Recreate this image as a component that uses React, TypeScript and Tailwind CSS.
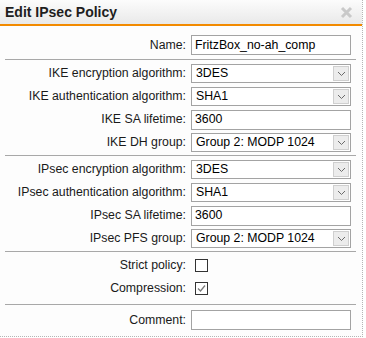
const font = { fontFamily: "'Liberation Sans', Arial, sans-serif" };

const Chevron = () => (
  <svg width="9" height="6" viewBox="0 0 9 6" fill="none">
    <path d="M1 1l3.5 3.5L8 1" stroke="#6b6b6b" strokeWidth="1" />
  </svg>
);

const Label = ({ text }: { text: string }) => (
  <div className="text-right pr-[5px] text-[12.3px] text-[#1a1a1a] whitespace-nowrap leading-none">{text}</div>
);

const SelectBox = ({ value }: { value: string }) => (
  <div className="flex h-[19px] w-[160px] border border-[#a3a3a3] bg-white">
    <div className="flex-1 pl-[4px] text-[12.3px] text-black flex items-center leading-none">{value}</div>
    <div className="w-[16px] my-px mr-px bg-[#ececec] border border-[#cfcfcf] flex items-center justify-center">
      <Chevron />
    </div>
  </div>
);

const TextBox = ({ value = "" }: { value?: string }) => (
  <div className="h-[20px] w-[160px] border border-[#a3a3a3] bg-white pl-[3px] text-[12.3px] text-black flex items-center leading-none">
    {value}
  </div>
);

const CheckBox = ({ checked }: { checked?: boolean }) => (
  <div className="ml-[4px] w-[13px] h-[13px] border border-[#333] bg-white flex items-center justify-center">
    {checked && (
      <svg width="11" height="11" viewBox="0 0 11 11" fill="none">
        <path d="M2 5.5l2.5 2.5L9 2.5" stroke="#7a7a7a" strokeWidth="1.3" />
      </svg>
    )}
  </div>
);

const Row = ({ label, children, h = "h-[23px]" }: { label: string; children: React.ReactNode; h?: string }) => (
  <div className={`grid grid-cols-[191px_160px] items-center ${h}`}>
    <Label text={label} />
    <div className="flex items-center">{children}</div>
  </div>
);

const Sep = ({ mt = "mt-px" }: { mt?: string }) => (
  <div className={`ml-[5px] w-[351px] h-px bg-[#a8a8a8] mb-[2px] ${mt}`} />
);

export default function App() {
  return (
    <div className="w-[366px] h-[338px] bg-white overflow-hidden" style={font}>
      <div className="w-[363px] h-[337px] border-r border-b border-dotted border-[#b5b5b5] bg-[#fdfdfd]">
        <div className="h-[26px] bg-gradient-to-b from-[#fcfcfc] to-[#e9e9e9] border-b-2 border-[#f28a00] flex items-center justify-between pl-[5px] pr-[9px]">
          <div className="text-[14px] font-bold text-[#1e1e1e] leading-none">Edit IPsec Policy</div>
          <svg width="13" height="13" viewBox="0 0 13 13">
            <path d="M2 2l9 9M11 2L2 11" stroke="#c9c9c9" strokeWidth="3" />
          </svg>
        </div>
        <div className="pt-[6px]">
          <Row label="Name:" h="h-[26px]">
            <TextBox value="FritzBox_no-ah_comp" />
          </Row>
          <Sep />
          <Row label="IKE encryption algorithm:"><SelectBox value="3DES" /></Row>
          <Row label="IKE authentication algorithm:"><SelectBox value="SHA1" /></Row>
          <Row label="IKE SA lifetime:"><TextBox value="3600" /></Row>
          <Row label="IKE DH group:"><SelectBox value="Group 2: MODP 1024" /></Row>
          <Sep />
          <Row label="IPsec encryption algorithm:"><SelectBox value="3DES" /></Row>
          <Row label="IPsec authentication algorithm:"><SelectBox value="SHA1" /></Row>
          <Row label="IPsec SA lifetime:"><TextBox value="3600" /></Row>
          <Row label="IPsec PFS group:"><SelectBox value="Group 2: MODP 1024" /></Row>
          <Sep />
          <Row label="Strict policy:"><CheckBox /></Row>
          <Row label="Compression:"><CheckBox checked /></Row>
          <Sep mt="mt-[4px]" />
          <Row label="Comment:" h="h-[26px]"><TextBox /></Row>
        </div>
      </div>
    </div>
  );
}
